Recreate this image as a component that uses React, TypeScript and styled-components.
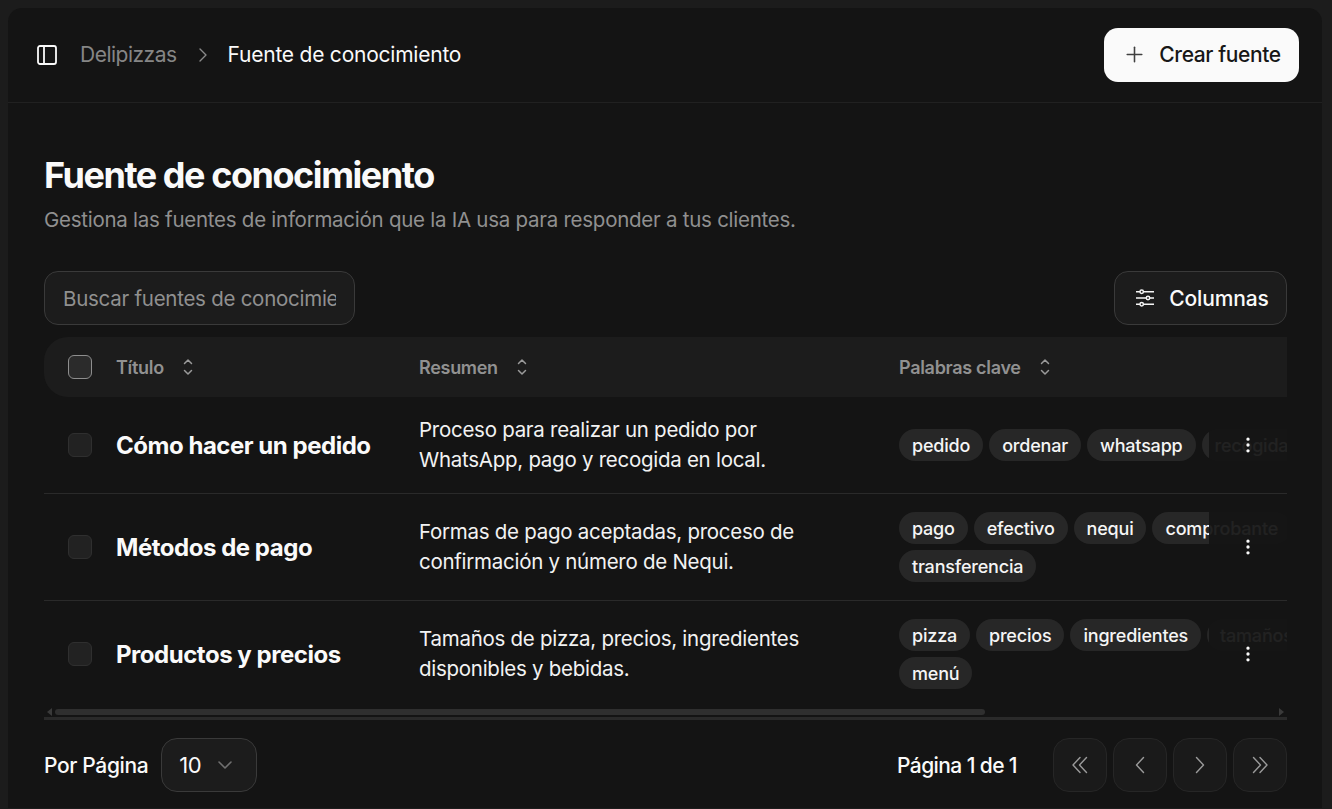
import React, { ReactElement } from 'react'
import styled, { createGlobalStyle } from 'styled-components'
import { ChevronDown, ChevronRight, EllipsisVertical, PanelLeft, Plus } from 'lucide-react'

const GlobalStyle = createGlobalStyle`
  html, body { margin: 0; padding: 0; height: 100%; background: #1c1c1c; overflow: hidden; }
  body { font-family: Inter, "Noto Sans", sans-serif; color: #fafafa; }
  * { box-sizing: border-box; }
`
const Shell = styled.div`
  padding: 8px 10px 1px 8px;
  height: 809px;
`
const Card = styled.div`
  background: #141414;
  border-radius: 14px 14px 0 0;
  height: 100%;
  display: flex;
  flex-direction: column;
`
const Header = styled.header`
  height: 95px;
  flex: none;
  display: flex;
  align-items: center;
  padding: 0 23px 1px 27px;
  border-bottom: 1px solid #212121;
`
const SideToggle = styled.span`
  display: flex;
  color: #fafafa;
  margin-right: 21px;
`
const CrumbMuted = styled.span`
  font-size: 21px;
  letter-spacing: -0.5px;
  color: #868686;
`
const CrumbSeparator = styled.span`
  display: flex;
  color: #8a8a8a;
  margin: 0 13px 0 14px;
`
const CrumbCurrent = styled.span`
  font-size: 21px;
  letter-spacing: -0.23px;
  color: #fafafa;
`
const CreateButton = styled.button`
  margin-left: auto;
  height: 54px;
  width: 195px;
  border: 0;
  border-radius: 14px;
  background: #fafafa;
  color: #171717;
  font: 500 21px Inter, sans-serif;
  letter-spacing: -0.4px;
  display: flex;
  align-items: center;
  justify-content: center;
  gap: 12px;
`
const Main = styled.main`
  flex: 1;
  padding: 48px 35px 0 36px;
  display: flex;
  flex-direction: column;
`
const Title = styled.h1`
  margin: 0;
  font-size: 36px;
  line-height: 48px;
  font-weight: 700;
  letter-spacing: -1.45px;
`
const Subtitle = styled.p`
  margin: 7px 0 0;
  font-size: 20.5px;
  line-height: 28px;
  letter-spacing: -0.26px;
  color: #909090;
`
const Toolbar = styled.div`
  margin-top: 37px;
  display: flex;
  justify-content: space-between;
`
const SearchBox = styled.div`
  width: 311px;
  height: 54px;
  padding: 0 18px;
  border: 1px solid #3a3a3a;
  border-radius: 14px;
  background: #1c1c1c;
  display: flex;
  align-items: center;
  font-size: 20.5px;
  letter-spacing: -0.26px;
  color: #909090;
  overflow: hidden;
  white-space: nowrap;
`
const SearchClip = styled.span`
  display: block;
  width: 100%;
  overflow: hidden;
`
const ColumnsButton = styled.button`
  width: 173px;
  height: 54px;
  padding: 0 0 0 4px;
  border: 1px solid #3a3a3a;
  border-radius: 14px;
  background: #1c1c1c;
  color: #fafafa;
  font: 500 21px Inter, sans-serif;
  letter-spacing: -0.12px;
  display: flex;
  align-items: center;
  justify-content: center;
  gap: 15px;
`
const Table = styled.div`
  margin-top: 12px;
  overflow: hidden;
`
const HeadRow = styled.div`
  height: 60px;
  background: #1c1c1c;
  border-radius: 24px 0 0 24px;
  display: grid;
  grid-template-columns: 48px 303px 480px 1fr;
  align-items: center;
  padding-left: 24px;
`
const HeadCell = styled.div`
  display: flex;
  align-items: center;
  gap: 16px;
  font-size: 18px;
  font-weight: 600;
  letter-spacing: -0.3px;
  color: #919191;
`
const SortIcon = styled.svg`
  width: 16px;
  height: 20px;
  color: #9a9a9a;
`
const Checkbox = styled.span<{ $head?: boolean }>`
  display: block;
  width: 24px;
  height: 24px;
  border-radius: 6px;
  background: ${(p) => (p.$head ? '#2b2b2b' : '#222222')};
  border: 1px solid ${(p) => (p.$head ? '#8e8e8e' : '#2f2f2f')};
`
const Row = styled.div<{ $height: number; $last?: boolean }>`
  position: relative;
  height: ${(p) => p.$height}px;
  display: grid;
  grid-template-columns: 48px 303px 480px 420px;
  align-items: center;
  padding-left: 24px;
  border-bottom: ${(p) => (p.$last ? '0' : '1px solid #2a2a2a')};
`
const RowTitle = styled.div`
  font-size: 24px;
  font-weight: 700;
  letter-spacing: -0.47px;
  white-space: nowrap;
`
const RowSummary = styled.div`
  font-size: 20.5px;
  line-height: 30px;
  letter-spacing: -0.27px;
  color: #f2f2f2;
  white-space: pre-line;
`
const Tags = styled.div`
  display: flex;
  flex-wrap: wrap;
  gap: 6px;
`
const Tag = styled.span`
  height: 32px;
  padding: 0 13px;
  border-radius: 16px;
  background: #272727;
  display: flex;
  align-items: center;
  font-size: 18px;
  font-weight: 500;
  letter-spacing: -0.2px;
  color: #f5f5f5;
  white-space: nowrap;
`
const RowActions = styled.div`
  position: absolute;
  top: 0;
  right: 0;
  bottom: 0;
  width: 78px;
  background: rgba(20, 20, 20, 0.94);
  display: flex;
  align-items: center;
  justify-content: center;
  color: #fafafa;
`
const ScrollArea = styled.div`
  height: 10px;
  display: flex;
  align-items: center;
  gap: 3px;
  padding: 0 3px;
`
const ScrollArrow = styled.span<{ $right?: boolean }>`
  width: 0;
  height: 0;
  border-top: 4px solid transparent;
  border-bottom: 4px solid transparent;
  ${(p) => (p.$right ? 'border-left: 5px solid #3a3a3a;' : 'border-right: 5px solid #3a3a3a;')}
`
const ScrollTrack = styled.div`
  flex: 1;
  height: 6px;
`
const ScrollThumb = styled.div`
  height: 6px;
  border-radius: 3px;
  background: #2f2f2f;
`
const ScrollLine = styled.div`
  height: 3px;
  background: #2a2a2a;
`
const Footer = styled.footer`
  margin-top: 18px;
  display: flex;
  align-items: center;
`
const FooterLabel = styled.span`
  font-size: 21px;
  font-weight: 500;
  letter-spacing: -0.36px;
  margin-right: 13px;
`
const PageSize = styled.div`
  width: 96px;
  height: 54px;
  border: 1px solid #3a3a3a;
  border-radius: 16px;
  background: #1c1c1c;
  display: flex;
  align-items: center;
  padding-left: 17px;
  gap: 12px;
  font-size: 22px;
  letter-spacing: -0.5px;
  color: #707070;
`
const PageSizeValue = styled.span`
  color: #fafafa;
`
const PageInfo = styled.span`
  margin-left: auto;
  margin-right: 36px;
  font-size: 21px;
  font-weight: 500;
  letter-spacing: -0.6px;
`
const Pager = styled.div`
  display: flex;
  gap: 6px;
`
const PagerButton = styled.button`
  width: 54px;
  height: 54px;
  border: 1px solid #262626;
  border-radius: 16px;
  background: #1a1a1a;
  color: #9a9a9a;
  display: flex;
  align-items: center;
  justify-content: center;
  padding: 0;
`

function SortArrows(): ReactElement {
  return (
    <SortIcon viewBox="0 0 16 20" fill="none" stroke="currentColor" strokeWidth="1.5" strokeLinecap="round" strokeLinejoin="round">
      <path d="M4.5 6.5L8 3l3.5 3.5" />
      <path d="M4.5 13.5L8 17l3.5-3.5" />
    </SortIcon>
  )
}

function ColumnsIcon(): ReactElement {
  return (
    <svg width="18" height="18" viewBox="0 0 18 18" fill="none" stroke="#f5f5f5" strokeWidth="1.5">
      <path d="M0 2.8h4M7.4 2.8H18M0 9h10.3M13.7 9H18M0 15.2h4M7.4 15.2H18" />
      <circle cx="5.7" cy="2.8" r="1.7" />
      <circle cx="12" cy="9" r="1.7" />
      <circle cx="5.7" cy="15.2" r="1.7" />
    </svg>
  )
}

function PagerIcon({ d }: { d: string }): ReactElement {
  return (
    <svg width="18" height="18" viewBox="0 0 18 18" fill="none" stroke="currentColor" strokeWidth="1.4" strokeLinecap="round" strokeLinejoin="round">
      <path d={d} />
    </svg>
  )
}

const rows = [
  {
    title: 'Cómo hacer un pedido',
    summary: 'Proceso para realizar un pedido por\nWhatsApp, pago y recogida en local.',
    tags: ['pedido', 'ordenar', 'whatsapp', 'recogida'],
    height: 97,
  },
  {
    title: 'Métodos de pago',
    summary: 'Formas de pago aceptadas, proceso de\nconfirmación y número de Nequi.',
    tags: ['pago', 'efectivo', 'nequi', 'comprobante', 'transferencia'],
    height: 107,
  },
  {
    title: 'Productos y precios',
    summary: 'Tamaños de pizza, precios, ingredientes\ndisponibles y bebidas.',
    tags: ['pizza', 'precios', 'ingredientes', 'tamaños', 'menú'],
    height: 106,
  },
]

export default function App(): ReactElement {
  return (
    <>
      <GlobalStyle />
      <Shell>
        <Card>
          <Header>
            <SideToggle><PanelLeft size={24} strokeWidth={1.8} /></SideToggle>
            <CrumbMuted>Delipizzas</CrumbMuted>
            <CrumbSeparator><ChevronRight size={24} strokeWidth={1.4} /></CrumbSeparator>
            <CrumbCurrent>Fuente de conocimiento</CrumbCurrent>
            <CreateButton><Plus size={25} strokeWidth={1.5} color="#404040" />Crear fuente</CreateButton>
          </Header>
          <Main>
            <Title>Fuente de conocimiento</Title>
            <Subtitle>Gestiona las fuentes de información que la IA usa para responder a tus clientes.</Subtitle>
            <Toolbar>
              <SearchBox><SearchClip>Buscar fuentes de conocimiento</SearchClip></SearchBox>
              <ColumnsButton><ColumnsIcon />Columnas</ColumnsButton>
            </Toolbar>
            <Table>
              <HeadRow>
                <Checkbox $head />
                <HeadCell>Título <SortArrows /></HeadCell>
                <HeadCell>Resumen <SortArrows /></HeadCell>
                <HeadCell>Palabras clave <SortArrows /></HeadCell>
              </HeadRow>
              {rows.map((row, i) => (
                <Row key={row.title} $height={row.height} $last={i === rows.length - 1}>
                  <Checkbox />
                  <RowTitle>{row.title}</RowTitle>
                  <RowSummary>{row.summary}</RowSummary>
                  <Tags>
                    {row.tags.map((tag) => <Tag key={tag}>{tag}</Tag>)}
                  </Tags>
                  <RowActions><EllipsisVertical size={20} strokeWidth={2} /></RowActions>
                </Row>
              ))}
            </Table>
            <ScrollArea>
              <ScrollArrow />
              <ScrollTrack><ScrollThumb style={{ width: `${(931 / 1222) * 100}%` }} /></ScrollTrack>
              <ScrollArrow $right />
            </ScrollArea>
            <ScrollLine />
            <Footer>
              <FooterLabel>Por Página</FooterLabel>
              <PageSize><PageSizeValue>10</PageSizeValue><ChevronDown size={24} strokeWidth={1.6} /></PageSize>
              <PageInfo>Página 1 de 1</PageInfo>
              <Pager>
                <PagerButton><PagerIcon d="M9 1.5L2 9l7 7.5M15.5 1.5L8.5 9l7 7.5" /></PagerButton>
                <PagerButton><PagerIcon d="M12.5 1.5L5.5 9l7 7.5" /></PagerButton>
                <PagerButton><PagerIcon d="M5.5 1.5l7 7.5-7 7.5" /></PagerButton>
                <PagerButton><PagerIcon d="M2.5 1.5l7 7.5-7 7.5M9 1.5l7 7.5-7 7.5" /></PagerButton>
              </Pager>
            </Footer>
          </Main>
        </Card>
      </Shell>
    </>
  )
}
